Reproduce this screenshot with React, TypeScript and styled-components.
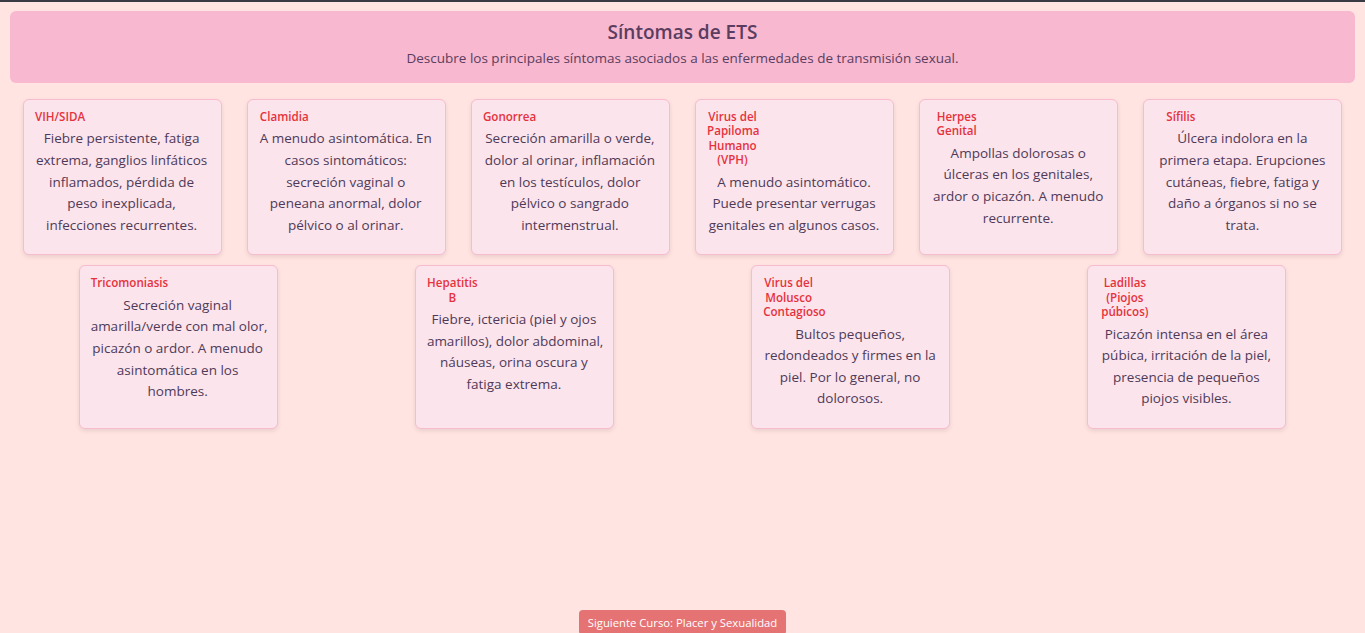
import React from "react";
import styled, { createGlobalStyle } from "styled-components";

const GlobalStyle = createGlobalStyle`
  html, body {
    margin: 0;
    padding: 0;
    background: #ffe4e1;
    font-family: "Open Sans", "Noto Sans", Arial, sans-serif;
  }
  * { box-sizing: border-box; }
`;

const TopRule = styled.div`
  height: 2px;
  background: #3a3a42;
`;

const Page = styled.main`
  padding: 9px 10px 0;
`;

const Header = styled.header`
  background: #f8b8cf;
  border-radius: 6px;
  padding: 8px 16px 15px;
  text-align: center;
`;

const Title = styled.h1`
  margin: 0;
  font-size: 19px;
  line-height: 26px;
  font-weight: 600;
  color: #5a3d60;
`;

const Subtitle = styled.p`
  margin: 3px 0 0;
  font-size: 13.5px;
  line-height: 20px;
  color: #5a3d60;
`;

const Grid = styled.section`
  margin-top: 16px;
  display: flex;
  flex-wrap: wrap;
  justify-content: space-around;
  row-gap: 10px;
`;

const Card = styled.article`
  flex: 0 0 199px;
  width: 199px;
  background: #fce4ec;
  border: 1px solid #f8bbd0;
  border-radius: 6px;
  padding: 10px 12px 18px 11px;
  box-shadow: 0 2px 5px rgba(0, 0, 0, 0.09);
`;

const CardTitle = styled.h3`
  margin: 0;
  width: 51px;
  font-size: 11.6px;
  line-height: 14.4px;
  font-weight: 600;
  color: #e5323c;
  text-align: center;
  white-space: pre;
`;

const CardText = styled.p`
  margin: 4px 0 0;
  font-size: 13.5px;
  line-height: 21.6px;
  color: #4e3a58;
  text-align: center;
  white-space: pre;
`;

const Footer = styled.div`
  margin-top: 181px;
  display: flex;
  justify-content: center;
`;

const NextButton = styled.button`
  border: none;
  background: #e57373;
  color: #ffffff;
  font-family: "Open Sans", "Noto Sans", Arial, sans-serif;
  font-size: 11.3px;
  line-height: 15px;
  padding: 5px 9px;
  border-radius: 4px;
  cursor: pointer;
`;

const items: { title: string; text: string }[] = [
  {
    title: "VIH/SIDA",
    text: "Fiebre persistente, fatiga\nextrema, ganglios linfáticos\ninflamados, pérdida de\npeso inexplicada,\ninfecciones recurrentes.",
  },
  {
    title: "Clamidia",
    text: "A menudo asintomática. En\ncasos sintomáticos:\nsecreción vaginal o\npeneana anormal, dolor\npélvico o al orinar.",
  },
  {
    title: "Gonorrea",
    text: "Secreción amarilla o verde,\ndolor al orinar, inflamación\nen los testículos, dolor\npélvico o sangrado\nintermenstrual.",
  },
  {
    title: "Virus del\nPapiloma\nHumano\n(VPH)",
    text: "A menudo asintomático.\nPuede presentar verrugas\ngenitales en algunos casos.",
  },
  {
    title: "Herpes\nGenital",
    text: "Ampollas dolorosas o\núlceras en los genitales,\nardor o picazón. A menudo\nrecurrente.",
  },
  {
    title: "Sífilis",
    text: "Úlcera indolora en la\nprimera etapa. Erupciones\ncutáneas, fiebre, fatiga y\ndaño a órganos si no se\ntrata.",
  },
  {
    title: "Tricomoniasis",
    text: "Secreción vaginal\namarilla/verde con mal olor,\npicazón o ardor. A menudo\nasintomática en los\nhombres.",
  },
  {
    title: "Hepatitis\nB",
    text: "Fiebre, ictericia (piel y ojos\namarillos), dolor abdominal,\nnáuseas, orina oscura y\nfatiga extrema.",
  },
  {
    title: "Virus del\nMolusco\nContagioso",
    text: "Bultos pequeños,\nredondeados y firmes en la\npiel. Por lo general, no\ndolorosos.",
  },
  {
    title: "Ladillas\n(Piojos\npúbicos)",
    text: "Picazón intensa en el área\npúbica, irritación de la piel,\npresencia de pequeños\npiojos visibles.",
  },
];

export default function App() {
  return (
    <>
      <GlobalStyle />
      <TopRule />
      <Page>
        <Header>
          <Title>Síntomas de ETS</Title>
          <Subtitle>
            Descubre los principales síntomas asociados a las enfermedades de transmisión sexual.
          </Subtitle>
        </Header>
        <Grid>
          {items.map((it) => (
            <Card key={it.title}>
              <CardTitle>{it.title}</CardTitle>
              <CardText>{it.text}</CardText>
            </Card>
          ))}
        </Grid>
        <Footer>
          <NextButton>Siguiente Curso: Placer y Sexualidad</NextButton>
        </Footer>
      </Page>
    </>
  );
}
